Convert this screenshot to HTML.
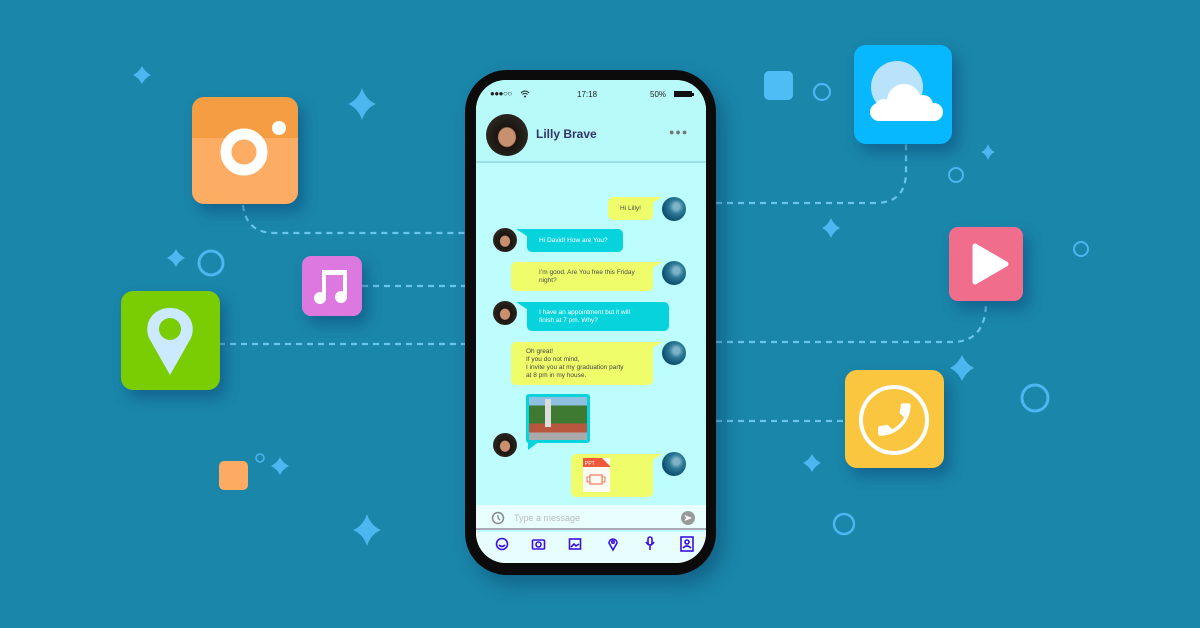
<!DOCTYPE html>
<html><head><meta charset="utf-8"><style>
*{margin:0;padding:0;box-sizing:border-box}
body{width:1200px;height:628px;background:#1a86aa;position:relative;overflow:hidden;font-family:"Liberation Sans",sans-serif}
.a{position:absolute}
.tile{position:absolute;border-radius:12px;box-shadow:6px 8px 14px rgba(10,60,110,.45)}
.bub{position:absolute;font-size:6.5px;color:#4a4a4a;line-height:8px;border-radius:5px;padding:0 0 0 12px;display:flex;align-items:center}
.y{background:#effd6b}
.c{background:#06d3db;color:#fff}
.av{position:absolute;width:24px;height:24px;border-radius:50%;overflow:hidden}
.avr{background:radial-gradient(circle at 60% 40%,#7fb3c8 0 15%,#2d7a98 35%,#0d4e6e 70%)}
.avl{background:radial-gradient(ellipse at 50% 55%,#c99070 0 28%,#1b1410 32%,#2b2620 70%,#7aa0a8 90%)}
</style></head><body>
<svg class="a" style="left:0;top:0" width="1200" height="628">
<g fill="none" stroke="#68c6ee" stroke-width="2.2" stroke-dasharray="6 5">
<path d="M243 205 Q246 233 275 233 L466 233"/>
<path d="M362 286 L466 286"/>
<path d="M219 344 L466 344"/>
<path d="M716 203 L875 203 Q906 203 906 172 L906 144"/>
<path d="M716 342 L955 342 Q986 340 986 302"/>
<path d="M716 421 L845 421"/>
</g>
<g fill="#4bb6ef">
<path d="M142 66 Q145 72 151 75 Q145 78 142 84 Q139 78 133 75 Q139 72 142 66Z"/>
<path d="M362 88 Q366 100 376 104 Q366 108 362 120 Q358 108 348 104 Q358 100 362 88Z"/>
<path d="M176 249 Q179 255 185 258 Q179 261 176 267 Q173 261 167 258 Q173 255 176 249Z"/>
<path d="M280 457 Q283 463 289 466 Q283 469 280 475 Q277 469 271 466 Q277 463 280 457Z"/>
<path d="M367 514 Q371 526 381 530 Q371 534 367 546 Q363 534 353 530 Q363 526 367 514Z"/>
<path d="M831 218 Q834 225 840 228 Q834 231 831 238 Q828 231 822 228 Q828 225 831 218Z"/>
<path d="M988 144 Q990 150 995 152 Q990 154 988 160 Q986 154 981 152 Q986 150 988 144Z"/>
<path d="M962 355 Q966 364 974 368 Q966 372 962 381 Q958 372 950 368 Q958 364 962 355Z"/>
<path d="M812 454 Q815 460 821 463 Q815 466 812 472 Q809 466 803 463 Q809 460 812 454Z"/>
</g>
<g fill="none" stroke="#4bb6ef">
<circle cx="211" cy="263" r="12" stroke-width="3"/>
<circle cx="822" cy="92" r="8" stroke-width="2.2"/>
<circle cx="956" cy="175" r="7" stroke-width="2"/>
<circle cx="1081" cy="249" r="7" stroke-width="2"/>
<circle cx="1035" cy="398" r="13" stroke-width="3"/>
<circle cx="844" cy="524" r="10" stroke-width="2.5"/>
<circle cx="260" cy="458" r="4" stroke-width="1.5"/>
</g>
<rect x="764" y="71" width="29" height="29" rx="5" fill="#4fbdf5"/>
<rect x="219" y="461" width="29" height="29" rx="5" fill="#fdab62"/>
</svg>

<!-- camera -->
<div class="tile" style="left:192px;top:97px;width:106px;height:107px;background:linear-gradient(#f59d42 0 41px,#fdac64 41px)"></div>
<svg class="a" style="left:192px;top:97px" width="106" height="107"><circle cx="52" cy="55" r="18" fill="none" stroke="#fff" stroke-width="11"/><circle cx="87" cy="31" r="7" fill="#fff"/></svg>
<!-- music -->
<div class="tile" style="left:302px;top:256px;width:60px;height:60px;background:#dc78e0;border-radius:9px"></div>
<svg class="a" style="left:302px;top:256px" width="60" height="60"><path d="M22 16 H43 V40 M22 16 V42" stroke="#fff" stroke-width="4" fill="none"/><rect x="20" y="14" width="25" height="5" fill="#fff"/><circle cx="18" cy="42" r="6" fill="#fff"/><circle cx="39" cy="41" r="6" fill="#fff"/></svg>
<!-- location -->
<div class="tile" style="left:121px;top:291px;width:99px;height:99px;background:#79cd02"></div>
<svg class="a" style="left:121px;top:291px" width="99" height="99"><path d="M49 17 C32 17 22 32 28 47 L49 84 L70 47 C76 32 66 17 49 17Z" fill="#cbeaff"/><circle cx="49" cy="38" r="11" fill="#79cd02"/></svg>
<!-- cloud -->
<div class="tile" style="left:854px;top:45px;width:98px;height:99px;background:#08b8fe"></div>
<svg class="a" style="left:854px;top:45px" width="98" height="99"><circle cx="43" cy="42" r="26" fill="#b9e3fb"/><g fill="#fff"><rect x="16" y="58" width="73" height="18" rx="9"/><circle cx="30" cy="64" r="10"/><circle cx="50" cy="56" r="17"/><circle cx="69" cy="60" r="10"/><circle cx="79" cy="67" r="9"/></g></svg>
<!-- play -->
<div class="tile" style="left:949px;top:227px;width:74px;height:74px;background:#f06e8c;border-radius:9px"></div>
<svg class="a" style="left:949px;top:227px" width="74" height="74"><path d="M26 19 L26 55 L57 37Z" fill="#fff" stroke="#fff" stroke-width="5" stroke-linejoin="round"/></svg>
<!-- phone call -->
<div class="tile" style="left:845px;top:370px;width:99px;height:98px;background:#fac640"></div>
<svg class="a" style="left:845px;top:370px" width="99" height="98"><circle cx="49" cy="50" r="33" fill="none" stroke="#fff" stroke-width="4"/><path transform="translate(71,28) scale(-1.8,1.8)" fill="#fff" d="M6.62 10.79c1.44 2.83 3.76 5.14 6.59 6.59l2.2-2.2c.27-.27.67-.36 1.02-.24 1.12.37 2.33.57 3.57.57.55 0 1 .45 1 1V20c0 .55-.45 1-1 1-9.39 0-17-7.610-17-17 0-.55.45-1 1-1h3.5c.55 0 1 .45 1 1 0 1.250.2 2.450.57 3.570.11.350.03.740-.25 1.020l-2.2 2.2z"/></svg>

<!-- phone -->
<div class="a" style="left:465px;top:70px;width:251px;height:505px;background:#0b0b0b;border-radius:42px;box-shadow:8px 10px 18px rgba(10,50,90,.4)"></div>
<div class="a" style="left:476px;top:80px;width:230px;height:483px;background:#bdfdfd;border-radius:30px;overflow:hidden">
  <div class="a" style="left:0;top:0;width:230px;height:83px;background:#b8fafa;border-bottom:2px solid #99dfe8"></div>
  <div class="a" style="left:14px;top:9px;font-size:8px;color:#222;letter-spacing:-.5px">●●●○○</div>
  <svg class="a" style="left:44px;top:10px" width="10" height="8"><path d="M1 3 Q5 -1 9 3 M2.5 4.5 Q5 2 7.5 4.5" stroke="#222" fill="none" stroke-width="1"/><circle cx="5" cy="6.5" r="1" fill="#222"/></svg>
  <div class="a" style="left:101px;top:10px;font-size:8px;color:#222">17:18</div>
  <div class="a" style="left:174px;top:10px;font-size:8px;color:#222">50%</div>
  <div class="a" style="left:198px;top:11px;width:18px;height:6px;background:#111"></div>
  <div class="a" style="left:216px;top:12.5px;width:1.5px;height:3px;background:#111"></div>
  <div class="av avl" style="left:10px;top:34px;width:42px;height:42px"></div>
  <div class="a" style="left:60px;top:47px;font-size:12px;font-weight:bold;color:#33336a">Lilly Brave</div>
  <div class="a" style="left:193px;top:47px;font-size:9px;color:#777;letter-spacing:1px">●●●</div>
  <div class="a" style="left:0;top:425px;width:230px;height:25px;background:#e9fefe;border-bottom:2px solid #aab"></div>
  <svg class="a" style="left:15px;top:431px" width="14" height="14"><circle cx="7" cy="7" r="5.5" fill="none" stroke="#888" stroke-width="1.5"/><path d="M7 4 V7 L9 9" stroke="#888" fill="none" stroke-width="1.3"/></svg>
  <div class="a" style="left:38px;top:433px;font-size:9px;color:#bbb">Type a message</div>
  <div class="a" style="left:205px;top:431px;width:14px;height:14px;border-radius:50%;background:#999"></div>
  <svg class="a" style="left:205px;top:431px" width="14" height="14"><path d="M3.5 4 L11 7 L3.5 10 L5 7Z" fill="#fff"/></svg>
  <div class="a" style="left:0;top:452px;width:230px;height:31px;background:#e8fefe"></div>
  <svg class="a" style="left:0;top:452px" width="230" height="31" fill="none" stroke="#3a10e0" stroke-width="1.6">
    <circle cx="26" cy="12" r="5.5"/><path d="M23 13 Q26 16 29 13"/>
    <rect x="56.5" y="8" width="12" height="9" rx="1"/><circle cx="62.5" cy="12.5" r="2.5"/>
    <rect x="93.5" y="7" width="11" height="10"/><path d="M95 15 L98 12 L100 14 L103 12" />
    <path d="M137 18 L133 11 A4 4 0 1 1 141 11Z"/><circle cx="137" cy="10" r="1.3"/>
    <rect x="172" y="5" width="4" height="8" rx="2"/><path d="M170 10 Q174 16 178 10 M174 14 V18"/>
    <rect x="205" y="5" width="12" height="14"/><circle cx="211" cy="10" r="2"/><path d="M207 16 Q211 12 215 16"/>
  </svg>
</div>

<!-- messages -->
<div class="bub y" style="left:608px;top:197px;width:45px;height:23px">Hi Lilly!</div>
<svg class="a" style="left:640px;top:197px" width="24" height="10"><path d="M0 0 L22 0 L8 9Z" fill="#effd6b"/></svg>
<div class="av avr" style="left:662px;top:197px"></div>

<div class="av avl" style="left:493px;top:228px"></div>
<svg class="a" style="left:516px;top:229px" width="16" height="10"><path d="M0 0 L16 0 L14 9Z" fill="#06d3db"/></svg>
<div class="bub c" style="left:527px;top:229px;width:96px;height:23px">Hi David! How are You?</div>

<div class="bub y" style="left:511px;top:262px;width:142px;height:29px;padding-left:28px">I’m good. Are You free this Friday<br>night?</div>
<svg class="a" style="left:640px;top:262px" width="24" height="10"><path d="M0 0 L22 0 L8 9Z" fill="#effd6b"/></svg>
<div class="av avr" style="left:662px;top:261px"></div>

<div class="av avl" style="left:493px;top:301px"></div>
<svg class="a" style="left:516px;top:302px" width="16" height="10"><path d="M0 0 L16 0 L14 9Z" fill="#06d3db"/></svg>
<div class="bub c" style="left:527px;top:302px;width:142px;height:29px">I have an appointment but it will<br>finish at 7 pm. Why?</div>

<div class="bub y" style="left:511px;top:342px;width:142px;height:43px;padding-left:15px;color:#444">Oh great!<br>If you do not mind,<br>I invite you at my graduation party<br>at 8 pm in my house.</div>
<svg class="a" style="left:640px;top:342px" width="24" height="10"><path d="M0 0 L22 0 L8 9Z" fill="#effd6b"/></svg>
<div class="av avr" style="left:662px;top:341px"></div>

<div class="a" style="left:526px;top:394px;width:64px;height:49px;background:#06d3db;border-radius:3px"></div>
<svg class="a" style="left:528px;top:441px" width="14" height="10"><path d="M0 0 L12 0 L0 9Z" fill="#06d3db"/></svg>
<div class="a" style="left:529px;top:397px;width:58px;height:43px;background:linear-gradient(#8fc0e0 0 20%,#3e7a32 20% 62%,#b9573e 62% 82%,#aaa 82%)"></div>
<div class="a" style="left:545px;top:399px;width:6px;height:28px;background:#ddd"></div>
<div class="av avl" style="left:493px;top:433px"></div>

<div class="bub y" style="left:571px;top:454px;width:82px;height:43px"></div>
<svg class="a" style="left:640px;top:454px" width="24" height="10"><path d="M0 0 L22 0 L8 9Z" fill="#effd6b"/></svg>
<div class="a" style="left:583px;top:458px;width:27px;height:34px;background:#fbfbf4"></div>
<svg class="a" style="left:583px;top:458px" width="27" height="34"><path d="M0 0 H19 L27 8 V9 H0Z" fill="#ef5a3a"/><text x="2" y="7" font-size="5" fill="#fff" font-family="Liberation Sans">PPT</text><rect x="7" y="17" width="12" height="9" fill="none" stroke="#ef7a5a" stroke-width="1.2"/><rect x="4" y="19" width="3" height="5" fill="none" stroke="#ef7a5a"/><rect x="19" y="19" width="3" height="5" fill="none" stroke="#ef7a5a"/></svg>
<div class="av avr" style="left:662px;top:452px"></div>
</body></html>
